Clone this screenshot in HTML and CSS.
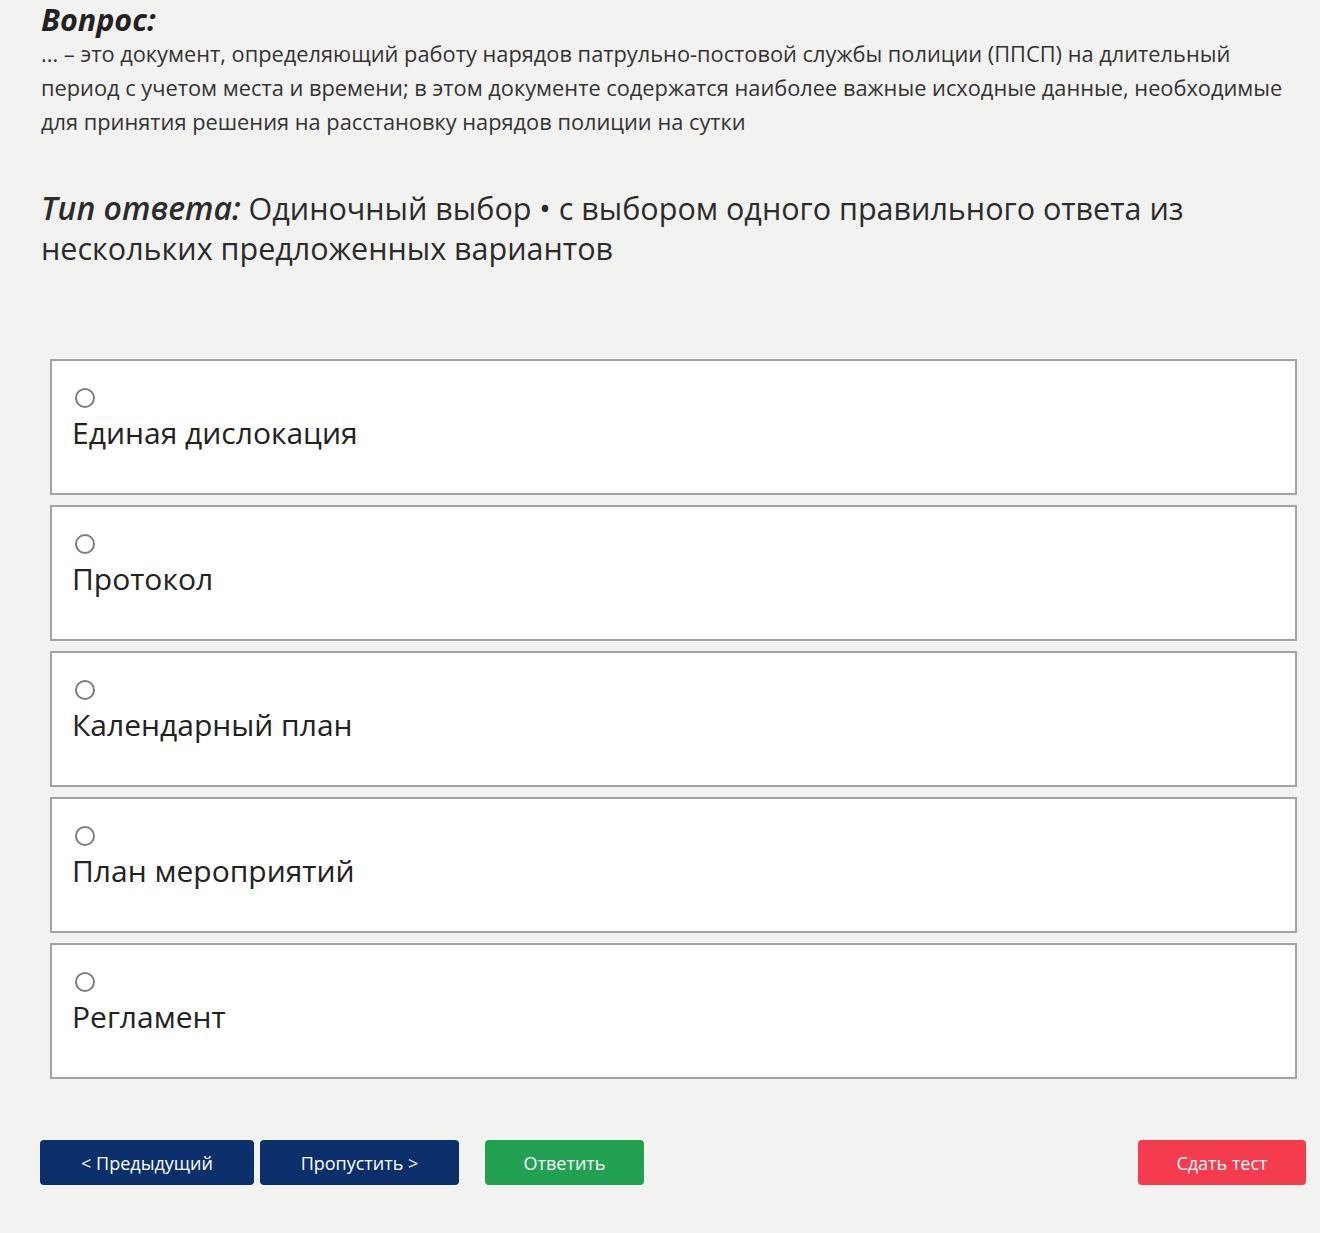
FILE: index.html
```html
<!DOCTYPE html>
<html lang="ru">
<head>
<meta charset="utf-8">
<title>Вопрос</title>
<link rel="stylesheet" href="styles.css">
</head>
<body>
<div class="page">
  <h2 class="q-title">Вопрос:</h2>
  <p class="q-text">... – это документ, определяющий работу нарядов патрульно-постовой службы полиции (ППСП) на длительный период с учетом места и времени; в этом документе содержатся наиболее важные исходные данные, необходимые для принятия решения на расстановку нарядов полиции на сутки</p>
  <p class="q-type"><span class="q-type-label">Тип ответа:</span> Одиночный выбор • с выбором одного правильного ответа из нескольких предложенных вариантов</p>

  <div class="options">
    <label class="option"><span class="radio"></span><span class="option-text">Единая дислокация</span></label>
    <label class="option"><span class="radio"></span><span class="option-text">Протокол</span></label>
    <label class="option"><span class="radio"></span><span class="option-text">Календарный план</span></label>
    <label class="option"><span class="radio"></span><span class="option-text">План мероприятий</span></label>
    <label class="option"><span class="radio"></span><span class="option-text">Регламент</span></label>
  </div>

  <div class="actions">
    <button class="btn btn-navy btn-prev">&lt; Предыдущий</button>
    <button class="btn btn-navy btn-skip">Пропустить &gt;</button>
    <button class="btn btn-green btn-answer">Ответить</button>
    <span class="spacer"></span>
    <button class="btn btn-red btn-finish">Сдать тест</button>
  </div>
</div>
</body>
</html>
```
FILE: styles.css
```css
html, body {
  margin: 0;
  padding: 0;
  background: #f2f2f1;
}
body {
  font-family: "Open Sans", "Noto Sans", "DejaVu Sans", sans-serif;
  color: #2b2b2b;
}
.page {
  padding: 0 14px 0 41px;
  height: 1233px;
  box-sizing: border-box;
}
.q-title {
  margin: 0;
  font-size: 30.5px;
  line-height: 38px;
  font-weight: 700;
  font-style: italic;
  color: #222;
}
.q-text {
  margin: -1px 0 0 0;
  font-size: 21.8px;
  line-height: 34px;
  color: #333;
  padding-right: 10px;
}
.q-type {
  margin: 49px 0 0 0;
  font-size: 30.5px;
  line-height: 40px;
  color: #2b2b2b;
}
.q-type-label {
  font-style: italic;
  font-weight: 600;
  font-size: 32px;
}
.options {
  margin: 91px 9px 0 9px;
  display: flex;
  flex-direction: column;
  gap: 10px;
}
.option {
  display: block;
  height: 136px;
  box-sizing: border-box;
  background: #fff;
  border: 2px solid #a3a3a3;
  padding: 27px 20px 0 20px;
}
.radio {
  display: block;
  width: 16px;
  height: 16px;
  border: 2px solid #7d7d7d;
  border-radius: 50%;
  margin-left: 3px;
}
.option-text {
  display: block;
  margin-top: 5px;
  font-size: 30px;
  line-height: 40px;
  color: #222;
}
.actions {
  margin-top: 61px;
  display: flex;
  align-items: center;
  margin-left: -1px;
}
.btn {
  height: 45px;
  border: none;
  border-radius: 4px;
  color: #fff;
  font-family: "Open Sans", "Noto Sans", sans-serif;
  font-size: 18px;
  padding: 0;
}
.btn-navy { background: #0b2f6b; }
.btn-green { background: #22a152; }
.btn-red { background: #f53c4f; }
.btn-prev { width: 214px; }
.btn-skip { width: 199px; margin-left: 6px; }
.btn-answer { width: 159px; margin-left: 26px; }
.spacer { flex: 1; }
.btn-finish { width: 168px; }
```
